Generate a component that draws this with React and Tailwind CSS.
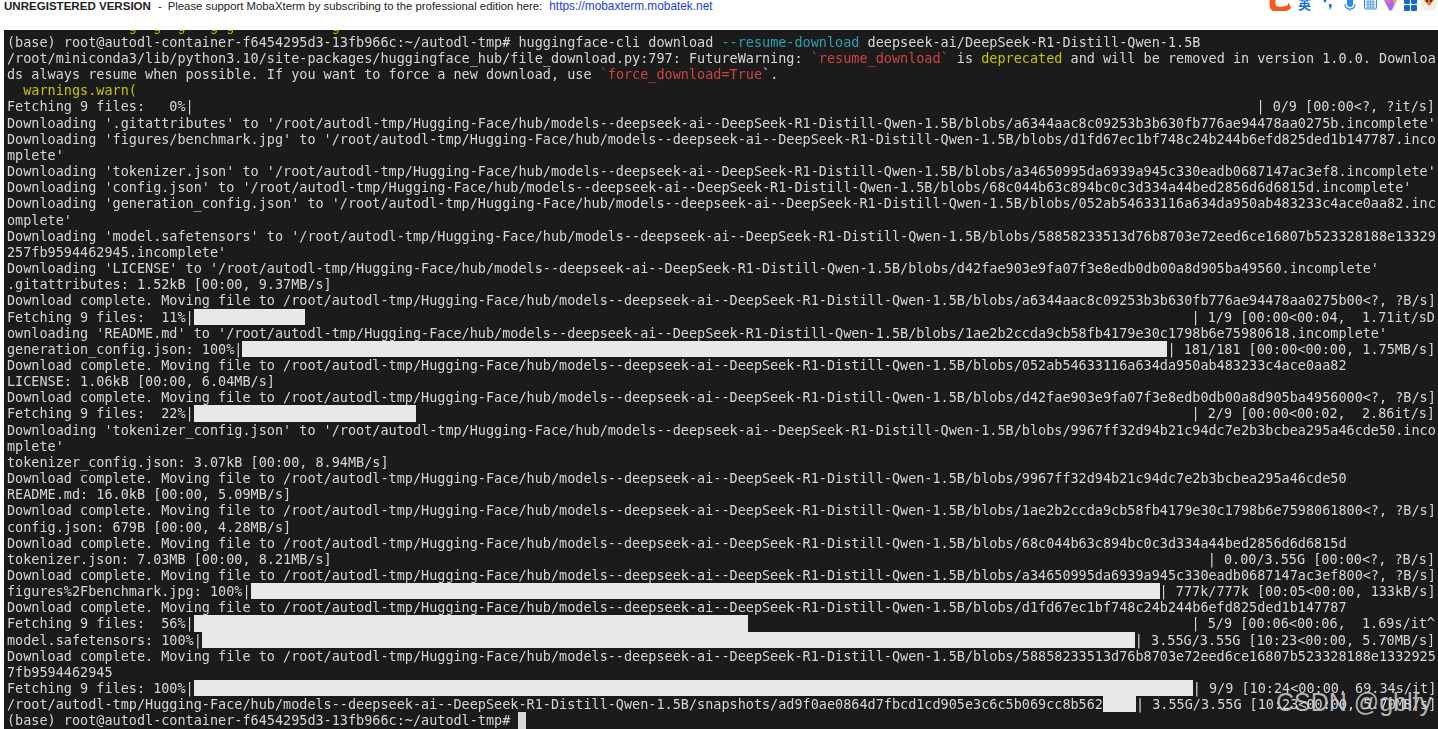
const BLOBS = '/root/autodl-tmp/Hugging-Face/hub/models--deepseek-ai--DeepSeek-R1-Distill-Qwen-1.5B/blobs/';
const MOVE = 'Download complete. Moving file to ' + BLOBS;
const FETCH = 'Fetching 9 files: ';

const PROMPT = '(base) root@autodl-container-f6454295d3-13fb966c:~/autodl-tmp# ';

const rows = [
  { parts: [{ t: '               g  g  g   g g            g', c: 'text-[#c4b800]' }] },
  { parts: [{ t: PROMPT + 'huggingface-cli download ' }, { t: '--resume-download', c: 'text-[#2f9fb5]' }, { t: ' deepseek-ai/DeepSeek-R1-Distill-Qwen-1.5B' }] },
  { parts: [{ t: '/root/miniconda3/lib/python3.10/site-packages/huggingface_hub/file_download.py:797: FutureWarning: ' }, { t: '`resume_download`', c: 'text-[#cc4444]' }, { t: ' is ' }, { t: 'deprecated', c: 'text-[#c4c400]' }, { t: ' and will be removed in version 1.0.0. Downloa' }] },
  { parts: [{ t: 'ds always resume when possible. If you want to force a new download, use ' }, { t: '`force_download=True', c: 'text-[#cc4444]' }, { t: '`.' }] },
  { parts: [{ t: '  warnings.warn(', c: 'text-[#c4c400]' }] },
  { left: FETCH + '  0%|', right: '| 0/9 [00:00<?, ?it/s]' },
  { left: "Downloading '.gitattributes' to '" + BLOBS + "a6344aac8c09253b3b630fb776ae94478aa0275b.incomplete'" },
  { left: "Downloading 'figures/benchmark.jpg' to '" + BLOBS + 'd1fd67ec1bf748c24b244b6efd825ded1b147787.inco' },
  { left: "mplete'" },
  { left: "Downloading 'tokenizer.json' to '" + BLOBS + "a34650995da6939a945c330eadb0687147ac3ef8.incomplete'" },
  { left: "Downloading 'config.json' to '" + BLOBS + "68c044b63c894bc0c3d334a44bed2856d6d6815d.incomplete'" },
  { left: "Downloading 'generation_config.json' to '" + BLOBS + '052ab54633116a634da950ab483233c4ace0aa82.inc' },
  { left: "omplete'" },
  { left: "Downloading 'model.safetensors' to '" + BLOBS + '58858233513d76b8703e72eed6ce16807b523328188e13329' },
  { left: "257fb9594462945.incomplete'" },
  { left: "Downloading 'LICENSE' to '" + BLOBS + "d42fae903e9fa07f3e8edb0db00a8d905ba49560.incomplete'" },
  { left: '.gitattributes: 1.52kB [00:00, 9.37MB/s]' },
  { left: MOVE + 'a6344aac8c09253b3b630fb776ae94478aa0275b00<?, ?B/s]' },
  { left: FETCH + ' 11%|', bar: 'w-[111px]', right: '| 1/9 [00:00<00:04,  1.71it/sD' },
  { left: "ownloading 'README.md' to '" + BLOBS + "1ae2b2ccda9cb58fb4179e30c1798b6e75980618.incomplete'" },
  { left: 'generation_config.json: 100%|', bar: 'w-[925px]', right: '| 181/181 [00:00<00:00, 1.75MB/s]' },
  { left: MOVE + '052ab54633116a634da950ab483233c4ace0aa82' },
  { left: 'LICENSE: 1.06kB [00:00, 6.04MB/s]' },
  { left: MOVE + 'd42fae903e9fa07f3e8edb0db00a8d905ba4956000<?, ?B/s]' },
  { left: FETCH + ' 22%|', bar: 'w-[222px]', right: '| 2/9 [00:00<00:02,  2.86it/s]' },
  { left: "Downloading 'tokenizer_config.json' to '" + BLOBS + '9967ff32d94b21c94dc7e2b3bcbea295a46cde50.inco' },
  { left: "mplete'" },
  { left: 'tokenizer_config.json: 3.07kB [00:00, 8.94MB/s]' },
  { left: MOVE + '9967ff32d94b21c94dc7e2b3bcbea295a46cde50' },
  { left: 'README.md: 16.0kB [00:00, 5.09MB/s]' },
  { left: MOVE + '1ae2b2ccda9cb58fb4179e30c1798b6e7598061800<?, ?B/s]' },
  { left: 'config.json: 679B [00:00, 4.28MB/s]' },
  { left: MOVE + '68c044b63c894bc0c3d334a44bed2856d6d6815d' },
  { left: 'tokenizer.json: 7.03MB [00:00, 8.21MB/s]', right: '| 0.00/3.55G [00:00<?, ?B/s]' },
  { left: MOVE + 'a34650995da6939a945c330eadb0687147ac3ef800<?, ?B/s]' },
  { left: 'figures%2Fbenchmark.jpg: 100%|', bar: 'w-[909px]', right: '| 777k/777k [00:05<00:00, 133kB/s]' },
  { left: MOVE + 'd1fd67ec1bf748c24b244b6efd825ded1b147787' },
  { left: FETCH + ' 56%|', bar: 'w-[554px]', right: '| 5/9 [00:06<00:06,  1.69s/it^' },
  { left: 'model.safetensors: 100%|', bar: 'w-[933px]', right: '| 3.55G/3.55G [10:23<00:00, 5.70MB/s]' },
  { left: MOVE + '58858233513d76b8703e72eed6ce16807b523328188e1332925' },
  { left: '7fb9594462945' },
  { left: FETCH + '100%|', bar: 'w-[999px]', right: '| 9/9 [10:24<00:00, 69.34s/it]' },
  { left: '/root/autodl-tmp/Hugging-Face/hub/models--deepseek-ai--DeepSeek-R1-Distill-Qwen-1.5B/snapshots/ad9f0ae0864d7fbcd1cd905e3c6c5b069cc8b562', bar: 'w-[33px]', right: '| 3.55G/3.55G [10:23<00:00, 5.70MB/s]' },
  { left: PROMPT, cursor: true },
];

function Row({ row }) {
  return (
    <div className="flex h-[16.17px] leading-[16.17px] whitespace-pre">
      {row.parts
        ? row.parts.map((p, i) => (
            <span key={i} className={p.c}>{p.t}</span>
          ))
        : <span>{row.left}</span>}
      {row.bar && <span className={`${row.bar} flex-none h-full bg-[#e8e8e8]`} />}
      {row.cursor && <span className="w-[8px] flex-none h-full bg-[#d8d8d8]" />}
      {row.right && <span className="ml-auto">{row.right}</span>}
    </div>
  );
}

function TrayIcons() {
  return (
    <div className="ml-auto flex items-start h-[11px] overflow-hidden">
      <svg width="28" height="22" viewBox="0 0 28 22" className="-mt-[4px]">
        <path d="M3 2 C2 7 2 13 6 15 C12 17 20 16 24 12 L22 7 C19 10 14 11 10 10 C8 9 8 5 9 2 Z" fill="#f4591f" />
        <path d="M9 8 C14 8 18 7 21 5 L21 9 C17 11 12 11 9 10 Z" fill="#fff" />
      </svg>
      <span className="ml-[3px] w-[14px] text-[13px] leading-[13px] -mt-[3px] font-bold text-[#1a73d8] font-['Noto_Sans_CJK_SC',sans-serif]">英</span>
      <svg width="10" height="11" viewBox="0 0 10 11" className="ml-[11px]">
        <circle cx="2" cy="1" r="1.4" fill="#1a73d8" />
        <path d="M6 4 h2.6 v2.6 q0 2 -2 3 l-.4 -.8 q1 -.6 1 -1.4 h-1.2 z" fill="#1a73d8" />
      </svg>
      <svg width="12" height="11" viewBox="0 0 12 11" className="ml-[11px]">
        <rect x="3" y="-3" width="6" height="10" rx="3" fill="#2f8be6" />
        <path d="M1 4 C1 8 3.5 9 6 9 C8.5 9 11 8 11 4" fill="none" stroke="#2f8be6" strokeWidth="1.2" />
        <path d="M6 9 V11" stroke="#2f8be6" strokeWidth="1.2" />
      </svg>
      <svg width="13" height="11" viewBox="0 0 13 11" className="ml-[8px]">
        <rect x="0.5" y="-2" width="12" height="11" rx="1.5" fill="#e6f1fc" stroke="#2f8be6" />
        <path d="M2 2 H11 M2 4.5 H11 M2 7 H11 M4 0 V8 M6.5 0 V8 M9 0 V8" stroke="#2f8be6" strokeWidth="0.7" />
      </svg>
      <svg width="13" height="11" viewBox="0 0 13 11" className="ml-[7px]">
        <path d="M0 0 H13 L8 10 Q6.5 11 5 10 Z" fill="#a36cf0" />
        <path d="M0 0 H7 L5 4 Z" fill="#f06ca8" />
        <path d="M9 0 H13 L10.5 5 Z" fill="#f0a860" />
      </svg>
      <svg width="13" height="11" viewBox="0 0 13 11" className="ml-[7px]">
        <rect x="0" y="-2" width="6" height="6" rx="1" fill="#1668c8" />
        <rect x="7" y="-2" width="6" height="6" rx="1" fill="#1668c8" />
        <rect x="0" y="5" width="6" height="6" rx="1" fill="#1668c8" />
        <rect x="7" y="5" width="6" height="6" rx="1" fill="#1668c8" />
      </svg>
      <svg width="16" height="11" viewBox="0 0 16 11" className="ml-[4px] mr-[1px]">
        <circle cx="8" cy="2" r="9" fill="#f3efe8" />
        <path d="M3 0 L8 6 L13 0 Z" fill="#e8702a" />
        <circle cx="6" cy="1" r="1" fill="#222" />
        <circle cx="10" cy="1" r="1" fill="#222" />
      </svg>
    </div>
  );
}

export default function App() {
  return (
    <div className="relative h-[729px] overflow-hidden bg-white">
      <div className="h-[30px]">
        <div className="flex items-start h-[12px] pl-[4px] overflow-hidden text-[11.35px] leading-[13px] font-['Liberation_Sans',sans-serif] whitespace-pre text-[#222]">
          <span className="font-bold text-[11.55px]">UNREGISTERED VERSION</span>
          <span className="ml-[7px]">-</span>
          <span className="ml-[6px]">Please support MobaXterm by subscribing to the professional edition here:</span>
          <span className="ml-[7px] text-[11.85px] text-[#1c3de0]">https://mobaxterm.mobatek.net</span>
          <TrayIcons />
        </div>
      </div>
      <div className="ml-[4px] h-[699px] overflow-hidden bg-[#1b1b1b] pl-[3px] pr-[3px] text-[13.49px] text-[#d6d6d6] font-['DejaVu_Sans_Mono',monospace] blur-[0.35px]">
        <div className="-mt-[12.3px]">
          {rows.map((row, i) => (
            <Row key={i} row={row} />
          ))}
        </div>
      </div>
      <div className="absolute right-[6px] top-[686px] text-[25px] leading-[32px] whitespace-pre text-[#d0d0d0]/85 font-['Liberation_Sans',sans-serif]">CSDN @gblfy</div>
    </div>
  );
}
